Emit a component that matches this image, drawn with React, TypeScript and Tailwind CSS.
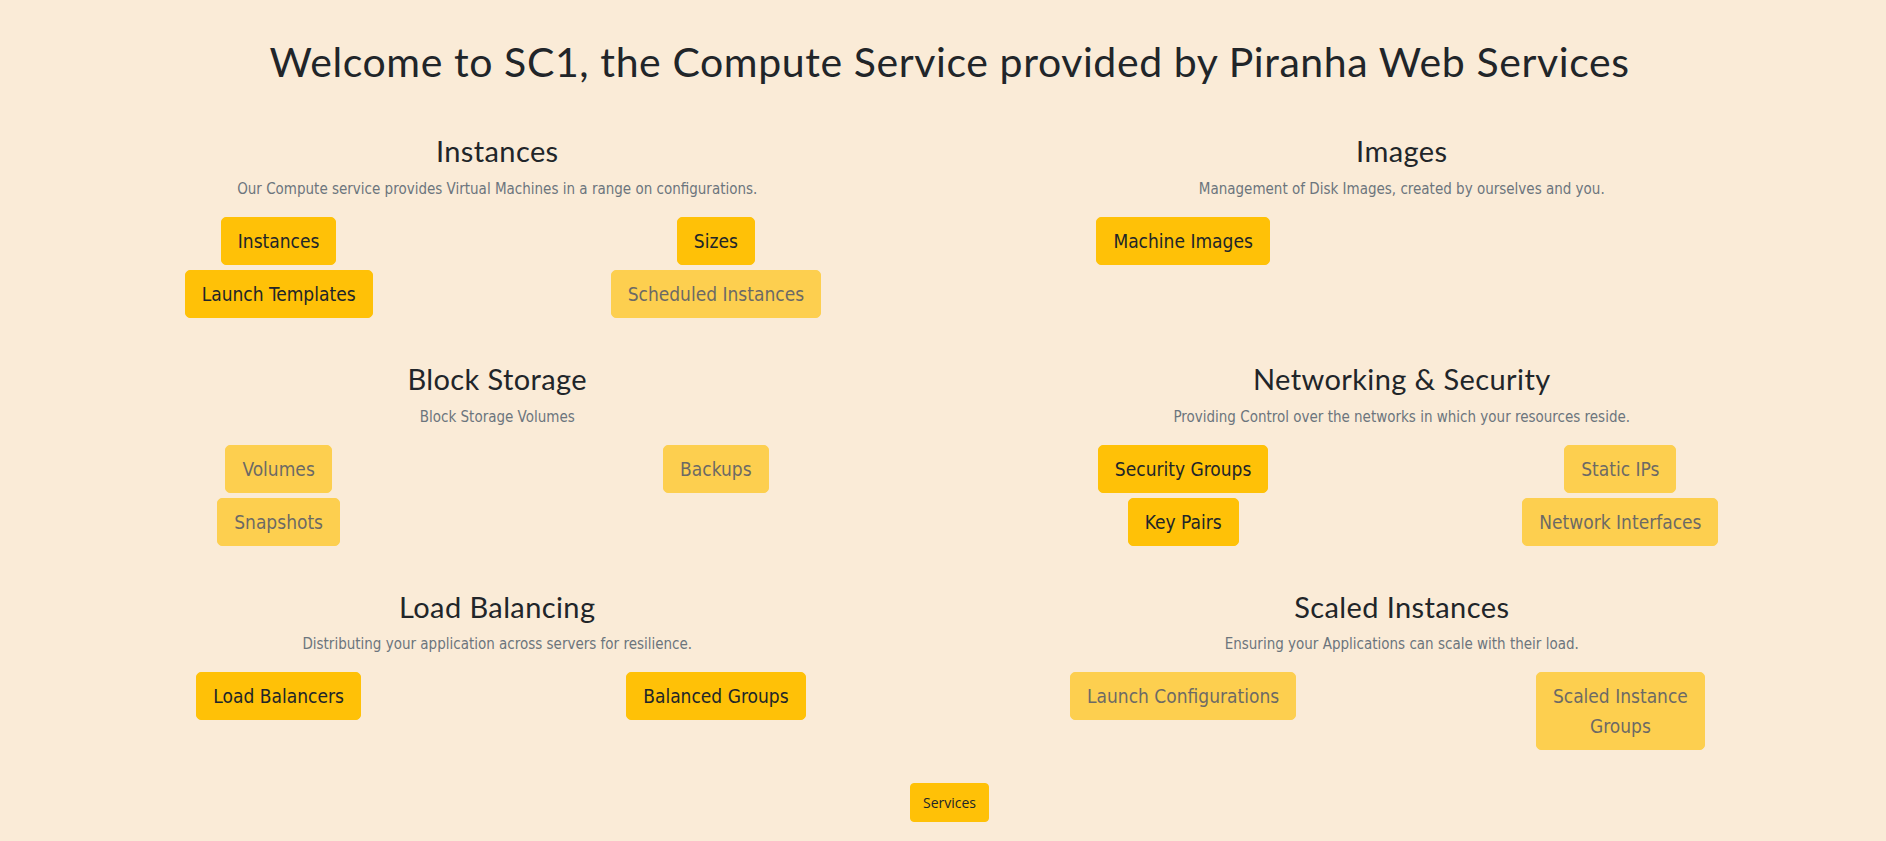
import React from 'react';

interface Link {
  label: string;
  disabled?: boolean;
}

interface Section {
  title: string;
  blurb: string;
  left: Link[];
  right: Link[];
}

const sections: Section[] = [
  {
    title: 'Instances',
    blurb: 'Our Compute service provides Virtual Machines in a range on configurations.',
    left: [{ label: 'Instances' }, { label: 'Launch Templates' }],
    right: [{ label: 'Sizes' }, { label: 'Scheduled Instances', disabled: true }],
  },
  {
    title: 'Images',
    blurb: 'Management of Disk Images, created by ourselves and you.',
    left: [{ label: 'Machine Images' }],
    right: [],
  },
  {
    title: 'Block Storage',
    blurb: 'Block Storage Volumes',
    left: [{ label: 'Volumes', disabled: true }, { label: 'Snapshots', disabled: true }],
    right: [{ label: 'Backups', disabled: true }],
  },
  {
    title: 'Networking & Security',
    blurb: 'Providing Control over the networks in which your resources reside.',
    left: [{ label: 'Security Groups' }, { label: 'Key Pairs' }],
    right: [{ label: 'Static IPs', disabled: true }, { label: 'Network Interfaces', disabled: true }],
  },
  {
    title: 'Load Balancing',
    blurb: 'Distributing your application across servers for resilience.',
    left: [{ label: 'Load Balancers' }],
    right: [{ label: 'Balanced Groups' }],
  },
  {
    title: 'Scaled Instances',
    blurb: 'Ensuring your Applications can scale with their load.',
    left: [{ label: 'Launch Configurations', disabled: true }],
    // wraps onto two lines in the original
    right: [{ label: 'Scaled Instance\nGroups', disabled: true }],
  },
];

const headFont = { fontFamily: 'Lato, "Open Sans", sans-serif' };
const bodyFont = { fontFamily: '"Liberation Sans Narrow", "DejaVu Sans Condensed", Roboto, sans-serif' };

const LinkButton: React.FC<{ link: Link }> = ({ link }) => (
  <button
    type="button"
    disabled={link.disabled}
    className={
      'whitespace-pre-line rounded-[5px] border border-[#ffc107] bg-[#ffc107] px-4 py-2 text-[19px] leading-[30px] text-[#212529] ' +
      (link.disabled ? 'opacity-65' : 'cursor-pointer')
    }
    style={bodyFont}
  >
    {link.label}
  </button>
);

const ServiceSection: React.FC<{ section: Section }> = ({ section }) => (
  <div className="px-[15px] text-center">
    <h2 className="mb-[8px] text-[29px] leading-[1.2] tracking-[0.4px] text-[#212529]" style={headFont}>
      {section.title}
    </h2>
    <p className="mb-[16px] text-[15px] leading-[24px] text-[#6c757d]" style={bodyFont}>
      {section.blurb}
    </p>
    <div className="grid grid-cols-2">
      <div className="flex flex-col items-center gap-[5px]">
        {section.left.map((link) => (
          <LinkButton key={link.label} link={link} />
        ))}
      </div>
      <div className="flex flex-col items-center gap-[5px]">
        {section.right.map((link) => (
          <LinkButton key={link.label} link={link} />
        ))}
      </div>
    </div>
  </div>
);

export default function App() {
  return (
    <div className="min-h-screen bg-[#faebd7] pb-8 pl-[45px] pr-[32px] pt-[38px]">
      <h1
        className="mb-[48px] text-center text-[41px] leading-[48px] tracking-[0.6px] text-[#212529]"
        style={headFont}
      >
        Welcome to SC1, the Compute Service provided by Piranha Web Services
      </h1>
      <div className="grid grid-cols-2 gap-y-[44px]">
        {sections.map((section) => (
          <ServiceSection key={section.title} section={section} />
        ))}
      </div>
      <div className="mt-[33px] flex justify-center">
        <button
          type="button"
          className="h-[39px] cursor-pointer rounded-[4px] border border-[#ffc107] bg-[#ffc107] px-3 text-[14px] text-[#212529]"
          style={{ fontFamily: '"Open Sans", sans-serif' }}
        >
          Services
        </button>
      </div>
    </div>
  );
}
